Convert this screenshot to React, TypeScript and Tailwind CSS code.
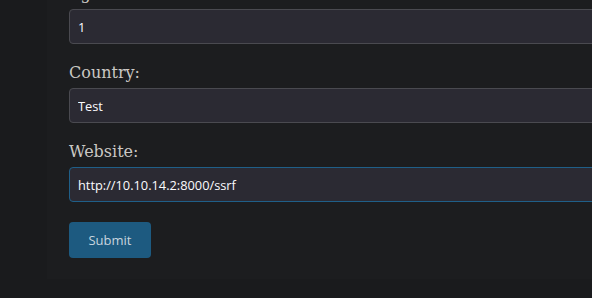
import React from 'react';

const fields = [
  { id: 'age', label: 'Age:', value: '1', focused: false },
  { id: 'country', label: 'Country:', value: 'Test', focused: false },
  { id: 'website', label: 'Website:', value: 'http://10.10.14.2:8000/ssrf', focused: true },
];

export default function App() {
  return (
    <div className="w-[592px] h-[298px] overflow-hidden bg-[#1a1b1d] flex">
      {/* left gutter */}
      <div className="w-[47px] shrink-0" />

      {/* form card */}
      <div className="flex-1 bg-[#1c1d1f] pl-[22px] h-[279px]">
        <form className="flex flex-col gap-[17px] mt-[-18px]" onSubmit={(e) => e.preventDefault()}>
          {fields.map((f) => (
            <div key={f.id} className="flex flex-col">
              <label
                htmlFor={f.id}
                className="block text-[16px] leading-[24px] mb-[3px] text-[#cac8c4] font-['DejaVu_Serif',serif]"
              >
                {f.label}
              </label>
              <input
                id={f.id}
                defaultValue={f.value}
                className={`w-[600px] h-[35px] px-[8px] pt-[1px] rounded-[4px] border bg-[#2b2a33] text-[#fbfbfe] text-[12.8px] font-['Open_Sans',sans-serif] outline-none ${
                  f.focused ? 'border-[#1f5f88]' : 'border-[#4a4a50]'
                }`}
              />
            </div>
          ))}
          <div className="pt-[3px]">
            <button
              type="submit"
              className="w-[82px] h-[36px] pt-[2px] rounded-[4px] bg-[#1d5a80] text-[#c7d4df] text-[13px] font-['Open_Sans',sans-serif]"
            >
              Submit
            </button>
          </div>
        </form>
      </div>
    </div>
  );
}
